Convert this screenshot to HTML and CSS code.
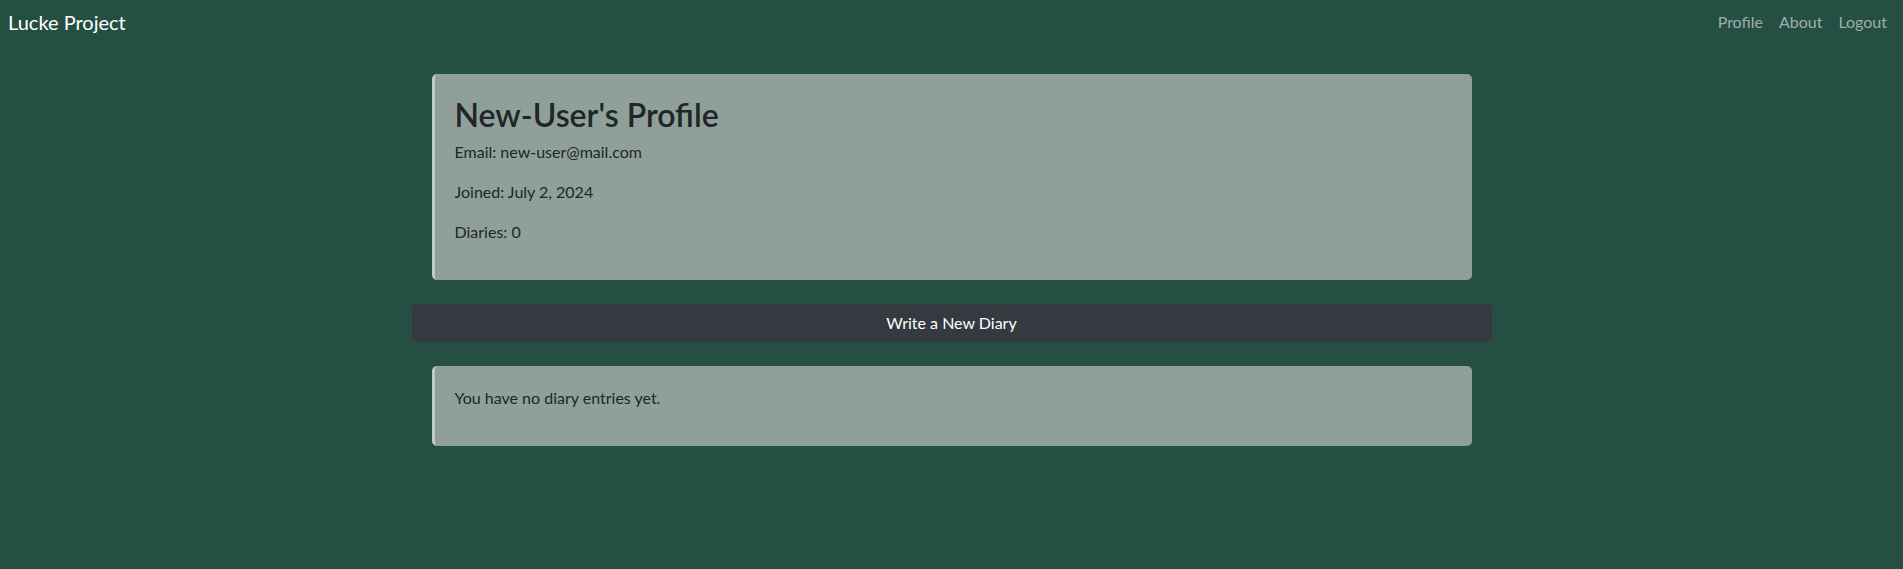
FILE: index.html
```html
<!DOCTYPE html>
<html lang="en">
<head>
<meta charset="utf-8">
<title>Lucke Project</title>
<link rel="stylesheet" href="styles.css">
</head>
<body>
<nav class="navbar">
  <a class="brand" href="#">Lucke Project</a>
  <ul class="nav-links">
    <li><a href="#">Profile</a></li>
    <li><a href="#">About</a></li>
    <li><a href="#">Logout</a></li>
  </ul>
</nav>
<main class="container">
  <section class="card">
    <h2 class="card-title">New-User's Profile</h2>
    <p>Email: new-user@mail.com</p>
    <p>Joined: July 2, 2024</p>
    <p>Diaries: 0</p>
  </section>
  <button class="btn-dark" type="button">Write a New Diary</button>
  <section class="card">
    <p>You have no diary entries yet.</p>
  </section>
</main>
</body>
</html>
```
FILE: styles.css
```css
* { box-sizing: border-box; }
html, body { margin: 0; padding: 0; }
body {
  background: #264f43;
  font-family: "Lato", "Liberation Sans", sans-serif;
  font-size: 16px;
  line-height: 1.5;
  color: #212529;
  min-height: 569px;
}
a { text-decoration: none; }
.navbar {
  display: flex;
  justify-content: space-between;
  align-items: center;
  padding: 7px 8px 7px 8px;
}
.brand {
  color: #ffffff;
  font-size: 20px;
  line-height: 30px;
}
.nav-links {
  display: flex;
  list-style: none;
  margin: 0;
  padding: 0;
}
.nav-links a {
  display: block;
  padding: 0 8px;
  line-height: 24px;
  color: rgba(255, 255, 255, 0.55);
}
.container {
  width: 1080px;
  margin: 30px auto 0;
  display: flex;
  flex-direction: column;
  gap: 24px;
}
.card {
  margin: 0 20px;
  background: #8fa099;
  border-left: 3px solid #c3cbc7;
  border-radius: 5px;
  padding: 20px 20px 20px 20px;
}
.card-title {
  font-size: 32px;
  font-weight: 600;
  line-height: 1.2;
  margin: 0 0 6px;
  padding-top: 2px;
}
.card p {
  margin: 0 0 16px;
  line-height: 24px;
}
.btn-dark {
  display: block;
  width: 100%;
  height: 38px;
  background: #343a40;
  color: #ffffff;
  border: 0;
  border-radius: 4px;
  font-family: inherit;
  font-size: 16px;
  line-height: 24px;
  padding: 7px 12px;
  text-align: center;
}
```
